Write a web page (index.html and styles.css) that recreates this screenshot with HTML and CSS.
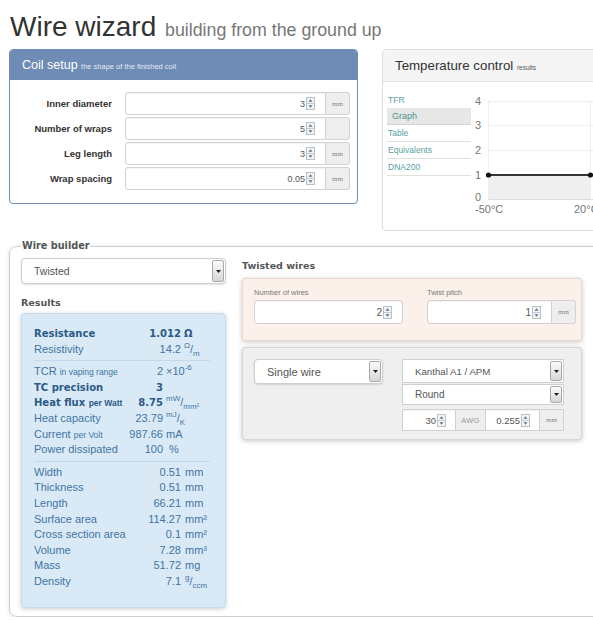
FILE: index.html
```html
<!DOCTYPE html>
<html lang="en">
<head>
<meta charset="utf-8">
<title>Wire wizard</title>
<link rel="stylesheet" href="styles.css">
</head>
<body>
<div class="page">
  <h1 class="title">Wire wizard <small>building from the ground up</small></h1>

  <div class="top-row">
    <section class="panel coil">
      <header class="coil-head">Coil setup <small>the shape of the finished coil</small></header>
      <div class="coil-body">
        <div class="form-row">
          <label>Inner diameter</label>
          <div class="input-group">
            <div class="num coil-num">3<svg class="spin" viewBox="0 0 9 13"><rect x="0.5" y="0.5" width="8" height="12" /><line x1="1" y1="6.5" x2="8" y2="6.5" /><path d="M4.5 2.3 6.5 4.8H2.5Z" /><path d="M4.5 10.7 6.5 8.2H2.5Z" /></svg></div>
            <span class="addon">mm</span>
          </div>
        </div>
        <div class="form-row">
          <label>Number of wraps</label>
          <div class="input-group">
            <div class="num coil-num">5<svg class="spin" viewBox="0 0 9 13"><rect x="0.5" y="0.5" width="8" height="12" /><line x1="1" y1="6.5" x2="8" y2="6.5" /><path d="M4.5 2.3 6.5 4.8H2.5Z" /><path d="M4.5 10.7 6.5 8.2H2.5Z" /></svg></div>
            <span class="addon"></span>
          </div>
        </div>
        <div class="form-row">
          <label>Leg length</label>
          <div class="input-group">
            <div class="num coil-num">3<svg class="spin" viewBox="0 0 9 13"><rect x="0.5" y="0.5" width="8" height="12" /><line x1="1" y1="6.5" x2="8" y2="6.5" /><path d="M4.5 2.3 6.5 4.8H2.5Z" /><path d="M4.5 10.7 6.5 8.2H2.5Z" /></svg></div>
            <span class="addon">mm</span>
          </div>
        </div>
        <div class="form-row">
          <label>Wrap spacing</label>
          <div class="input-group">
            <div class="num coil-num">0.05<svg class="spin" viewBox="0 0 9 13"><rect x="0.5" y="0.5" width="8" height="12" /><line x1="1" y1="6.5" x2="8" y2="6.5" /><path d="M4.5 2.3 6.5 4.8H2.5Z" /><path d="M4.5 10.7 6.5 8.2H2.5Z" /></svg></div>
            <span class="addon">mm</span>
          </div>
        </div>
      </div>
    </section>

    <section class="panel temp">
      <header class="temp-head">Temperature control <small>results</small></header>
      <div class="temp-body">
        <nav class="temp-nav">
          <div class="nav-title">TFR</div>
          <div class="nav-item active">Graph</div>
          <div class="nav-item">Table</div>
          <div class="nav-item">Equivalents</div>
          <div class="nav-item">DNA200</div>
        </nav>
        <svg class="chart" width="130" height="140" viewBox="0 0 130 140">
          <rect class="area" x="17.5" y="93" width="102" height="24" />
          <g class="grid">
            <line x1="17.5" y1="19.5" x2="130" y2="19.5" />
            <line x1="17.5" y1="43.5" x2="130" y2="43.5" />
            <line x1="17.5" y1="68.5" x2="130" y2="68.5" />
            <line x1="17.5" y1="19" x2="17.5" y2="117" />
            <line x1="119.5" y1="19" x2="119.5" y2="117" />
          </g>
          <line class="axis-line" x1="17.5" y1="117.5" x2="130" y2="117.5" />
          <line class="series" x1="17.5" y1="93" x2="119.5" y2="93" />
          <circle class="dot" cx="17.5" cy="93" r="2.6" />
          <circle class="dot" cx="119.5" cy="93" r="2.6" />
          <g class="axis">
            <text x="4" y="23">4</text>
            <text x="4" y="47">3</text>
            <text x="4" y="72">2</text>
            <text x="4" y="97">1</text>
            <text x="4" y="119">0</text>
            <text x="4" y="131">-50°C</text>
            <text x="103" y="131">20°C</text>
          </g>
        </svg>
      </div>
    </section>
  </div>

  <fieldset class="builder">
    <legend>Wire builder</legend>
    <div class="builder-cols">
      <div class="left-col">
        <div class="sel sel-twisted">Twisted<span class="caret-btn"><svg viewBox="0 0 5 3"><path d="M0 0H5L2.5 3Z" /></svg></span></div>
        <h2 class="sub-head results-head">Results</h2>
        <div class="results">
          <div class="rgroup g1">
            <span class="b">Resistance</span><span class="v b">1.012</span><span class="u b">Ω</span>
            <span>Resistivity</span><span class="v">14.2</span><span class="u"><sup>Ω</sup>/<sub>m</sub></span>
          </div>
          <div class="sep"></div>
          <div class="rgroup g2">
            <span>TCR <small>in vaping range</small></span><span class="v">2</span><span class="u">×10<sup>-6</sup></span>
            <span class="b">TC precision</span><span class="v b">3</span><span class="u"></span>
            <span class="b">Heat flux <small>per Watt</small></span><span class="v b">8.75</span><span class="u"><sup>mW</sup>/<sub>mm²</sub></span>
            <span>Heat capacity</span><span class="v">23.79</span><span class="u"><sup>mJ</sup>/<sub>K</sub></span>
            <span>Current <small>per Volt</small></span><span class="v">987.66</span><span class="u">mA</span>
            <span>Power dissipated</span><span class="v">100</span><span class="u">&nbsp;%</span>
          </div>
          <div class="sep"></div>
          <div class="rgroup g3">
            <span>Width</span><span class="v">0.51</span><span class="u">mm</span>
            <span>Thickness</span><span class="v">0.51</span><span class="u">mm</span>
            <span>Length</span><span class="v">66.21</span><span class="u">mm</span>
            <span>Surface area</span><span class="v">114.27</span><span class="u">mm²</span>
            <span>Cross section area</span><span class="v">0.1</span><span class="u">mm²</span>
            <span>Volume</span><span class="v">7.28</span><span class="u">mm³</span>
            <span>Mass</span><span class="v">51.72</span><span class="u">mg</span>
            <span>Density</span><span class="v">7.1</span><span class="u"><sup>g</sup>/<sub>ccm</sub></span>
          </div>
        </div>
      </div>

      <div class="right-col">
        <h2 class="sub-head twist-head">Twisted wires</h2>
        <div class="twist-panel">
          <div class="field">
            <div class="flabel">Number of wires</div>
            <div class="num twist-num wide">2<svg class="spin" viewBox="0 0 9 13"><rect x="0.5" y="0.5" width="8" height="12" /><line x1="1" y1="6.5" x2="8" y2="6.5" /><path d="M4.5 2.3 6.5 4.8H2.5Z" /><path d="M4.5 10.7 6.5 8.2H2.5Z" /></svg></div>
          </div>
          <div class="field">
            <div class="flabel">Twist pitch</div>
            <div class="input-group twist-group">
              <div class="num twist-num">1<svg class="spin" viewBox="0 0 9 13"><rect x="0.5" y="0.5" width="8" height="12" /><line x1="1" y1="6.5" x2="8" y2="6.5" /><path d="M4.5 2.3 6.5 4.8H2.5Z" /><path d="M4.5 10.7 6.5 8.2H2.5Z" /></svg></div>
              <span class="addon">mm</span>
            </div>
          </div>
        </div>

        <div class="single-panel">
          <div class="sel sel-single">Single wire<span class="caret-btn"><svg viewBox="0 0 5 3"><path d="M0 0H5L2.5 3Z" /></svg></span></div>
          <div class="wire-opts">
            <div class="sel sel-mat">Kanthal A1 / APM<span class="caret-btn"><svg viewBox="0 0 5 3"><path d="M0 0H5L2.5 3Z" /></svg></span></div>
            <div class="sel sel-shape">Round<span class="caret-btn"><svg viewBox="0 0 5 3"><path d="M0 0H5L2.5 3Z" /></svg></span></div>
            <div class="gauge-row">
              <div class="num gauge-num">30<svg class="spin" viewBox="0 0 9 13"><rect x="0.5" y="0.5" width="8" height="12" /><line x1="1" y1="6.5" x2="8" y2="6.5" /><path d="M4.5 2.3 6.5 4.8H2.5Z" /><path d="M4.5 10.7 6.5 8.2H2.5Z" /></svg></div>
              <span class="addon awg">AWG</span>
              <div class="num gauge-num mid">0.255<svg class="spin" viewBox="0 0 9 13"><rect x="0.5" y="0.5" width="8" height="12" /><line x1="1" y1="6.5" x2="8" y2="6.5" /><path d="M4.5 2.3 6.5 4.8H2.5Z" /><path d="M4.5 10.7 6.5 8.2H2.5Z" /></svg></div>
              <span class="addon">mm</span>
            </div>
          </div>
        </div>
      </div>
    </div>
  </fieldset>
</div>
</body>
</html>
```

FILE: styles.css
```css
* { box-sizing: border-box; }

html, body {
  margin: 0;
  padding: 0;
  overflow: hidden;
  background: #fff;
}

body {
  font-family: "Liberation Sans", Arial, sans-serif;
  color: #333;
}

.page {
  width: 660px;
  padding-left: 9px;
}

/* heading */
.title {
  margin: 10px 0 6px 1px;
  font-size: 28px;
  line-height: 33px;
  font-weight: normal;
  color: #333;
}
.title small {
  font-size: 17.8px;
  line-height: 1;
  color: #777;
  margin-left: 1px;
}

.top-row {
  display: flex;
  align-items: flex-start;
  gap: 24px;
}

.panel {
  background: #fff;
  border: 1px solid #ddd;
  border-radius: 4px;
  overflow: hidden;
}

/* coil setup */
.coil {
  width: 349px;
  border-color: #6e8cb6;
}
.coil-head {
  height: 30px;
  line-height: 30px;
  padding: 0 12px;
  background: #6e8cb6;
  color: #fff;
  font-size: 12.5px;
}
.coil-head small {
  font-size: 7.5px;
  line-height: 1;
  color: #e3e9f3;
}
.coil-body {
  display: flex;
  flex-direction: column;
  gap: 2px;
  padding: 12px 6px 13px 0;
}
.form-row {
  display: flex;
  align-items: stretch;
  height: 23px;
}
.form-row label {
  width: 102px;
  margin-right: 13px;
  align-self: center;
  text-align: right;
  font-size: 9.5px;
  font-weight: bold;
  color: #333;
}

.input-group {
  display: flex;
  align-items: stretch;
}

.num {
  display: flex;
  align-items: center;
  justify-content: flex-end;
  background: #fff;
  border: 1px solid #d2d2d2;
  border-radius: 3px 0 0 3px;
  padding-right: 10px;
  font-size: 9px;
  color: #555;
  box-shadow: inset 0 1px 1px rgba(0, 0, 0, 0.05);
}
.coil-num { width: 201px; }

.spin {
  width: 9px;
  height: 13px;
  margin-left: 1px;
}
.spin rect { fill: #f1f4f7; stroke: #b9c0c8; stroke-width: 1; }
.spin line { stroke: #c3cad2; stroke-width: 1; }
.spin path { fill: #68707a; }

.addon {
  width: 24px;
  display: flex;
  align-items: center;
  justify-content: center;
  background: #eee;
  border: 1px solid #d2d2d2;
  border-left: none;
  border-radius: 0 3px 3px 0;
  font-family: "Liberation Serif", serif;
  font-size: 7px;
  color: #888;
}

/* temperature control */
.temp {
  width: 240px;
  height: 182px;
}
.temp-head {
  height: 32px;
  line-height: 31px;
  padding: 0 12px;
  background: #f5f5f5;
  border-bottom: 1px solid #e2e2e2;
  font-size: 13.3px;
  color: #333;
}
.temp-head small {
  font-size: 6.5px;
  line-height: 1;
  color: #555;
}
.temp-body {
  display: flex;
  align-items: flex-start;
}
.temp-nav {
  width: 84px;
  margin: 10px 0 0 4px;
  font-size: 8.5px;
  color: #58a2a2;
}
.nav-title {
  height: 16px;
  line-height: 16px;
  padding-left: 1px;
}
.nav-item {
  height: 17px;
  line-height: 16px;
  border-bottom: 1px solid #e0e0e0;
  padding-left: 1px;
}
.nav-item.active {
  background: #e7e7e7;
  border-bottom-color: #d4d4d4;
  padding-left: 5px;
  font-size: 9px;
  color: #4f9191;
}
.chart { display: block; }
.chart .area { fill: #efefef; }
.chart .grid line { stroke: #efefef; stroke-width: 1; }
.chart .axis-line { stroke: #ddd; stroke-width: 1; }
.chart .series { stroke: #333; stroke-width: 2; }
.chart .dot { fill: #111; }
.chart .axis text {
  font-family: "Liberation Sans", Arial, sans-serif;
  font-size: 11px;
  fill: #777;
}

/* wire builder */
.builder {
  margin: 8px 0 0 0;
  padding: 5px 11px 8px;
  width: 640px;
  border: 1px solid #cfcfcf;
  border-radius: 8px 0 0 8px;
  box-shadow: 0 1px 5px rgba(0, 0, 0, 0.13);
}
.builder legend {
  padding: 0 1px;
  font-family: "DejaVu Sans", Verdana, sans-serif;
  font-size: 9.7px;
  font-weight: bold;
  line-height: 14px;
  color: #555;
}
.builder-cols {
  display: flex;
  align-items: flex-start;
  gap: 16px;
}
.left-col { width: 205px; }
.right-col { width: 340px; }

.sub-head {
  margin: 0;
  font-family: "DejaVu Sans", Verdana, sans-serif;
  font-size: 9.5px;
  font-weight: bold;
  line-height: 14px;
  color: #555;
}
.results-head { margin: 12px 0 3px; }
.twist-head { margin: 1px 0 5px; }

/* select boxes */
.sel {
  display: flex;
  align-items: center;
  justify-content: space-between;
  background: #fff;
  border: 1px solid #cfcfcf;
  border-radius: 4px;
  padding-left: 12px;
  color: #555;
  box-shadow: 0 1px 2px rgba(0, 0, 0, 0.12);
}
.caret-btn {
  display: flex;
  align-items: center;
  justify-content: center;
  width: 12px;
  align-self: stretch;
  margin: 1px 1px 1px 0;
  background: linear-gradient(#fbfbfb, #d6d6d6);
  border: 1px solid #a9a9a9;
  border-radius: 2px;
}
.caret-btn svg { width: 5px; height: 3px; }
.caret-btn path { fill: #222; }

.sel-twisted {
  height: 26px;
  font-size: 10.5px;
}

/* results */
.results {
  background: #d9eaf6;
  border: 1px solid #c7dcec;
  border-radius: 4px;
  box-shadow: 0 1px 4px rgba(0, 0, 0, 0.2);
  padding: 12px 0 17px 12px;
  font-size: 11px;
  line-height: 15.5px;
  color: #4274a4;
}
.rgroup {
  display: grid;
  grid-auto-rows: 15.6px;
  white-space: nowrap;
}
.g1 { grid-template-columns: 104px 40px auto; column-gap: 3px; }
.g2 { grid-template-columns: 90px 36px auto; column-gap: 3px; }
.g3 { grid-template-columns: 110px 33px auto; column-gap: 4px; }
.rgroup .v { text-align: right; }
.rgroup .b {
  font-family: "DejaVu Sans", Verdana, sans-serif;
  font-size: 10px;
  font-weight: bold;
  color: #2c5a87;
}
.rgroup small { font-size: 8.5px; }
.rgroup .b small {
  font-family: "Liberation Sans", Arial, sans-serif;
  font-size: 8.5px;
}
.rgroup sup, .rgroup sub {
  font-size: 8px;
  line-height: 0;
}
.sep {
  height: 1px;
  margin: 3px 15px 3px 0;
  background: #c4d8e8;
}

/* twisted wires */
.twist-panel {
  display: flex;
  gap: 24px;
  padding: 9px 6px 16px 11px;
  background: #fcf1ea;
  border: 1px solid #e6d8cd;
  border-radius: 3px;
  box-shadow: 0 1px 5px rgba(0, 0, 0, 0.22);
}
.flabel {
  height: 12px;
  line-height: 10px;
  font-size: 7.5px;
  color: #777;
}
.twist-num {
  height: 24px;
  font-size: 10px;
}
.twist-num.wide {
  width: 149px;
  border-radius: 3px;
}
.twist-group .twist-num { width: 125px; }
.twist-group .addon { height: 24px; }

/* single wire */
.single-panel {
  display: flex;
  align-items: flex-start;
  gap: 19px;
  margin-top: 6px;
  padding: 11px 17px 8px 11px;
  background: #efefef;
  border: 1px solid #d6d6d6;
  border-radius: 3px;
  box-shadow: 0 1px 5px rgba(0, 0, 0, 0.22);
}
.sel-single {
  width: 130px;
  height: 25px;
  font-size: 11px;
}
.wire-opts {
  width: 162px;
  display: flex;
  flex-direction: column;
}
.sel-mat {
  height: 24px;
  font-size: 9.7px;
  border-radius: 0;
  box-shadow: none;
}
.sel-shape {
  height: 21px;
  margin-top: 1px;
  font-size: 10px;
  border-radius: 0;
  box-shadow: none;
}
.gauge-row {
  display: flex;
  height: 22px;
  margin-top: 4px;
}
.gauge-num {
  width: 54px;
  border-radius: 0;
  padding-right: 9px;
  font-size: 9.5px;
}
.gauge-num.mid {
  border-left: none;
}
.gauge-row .addon {
  border-radius: 0;
}
.addon.awg {
  width: 30px;
  font-family: "Liberation Sans", Arial, sans-serif;
  font-size: 7.5px;
  color: #999;
  letter-spacing: 0.3px;
}
```
